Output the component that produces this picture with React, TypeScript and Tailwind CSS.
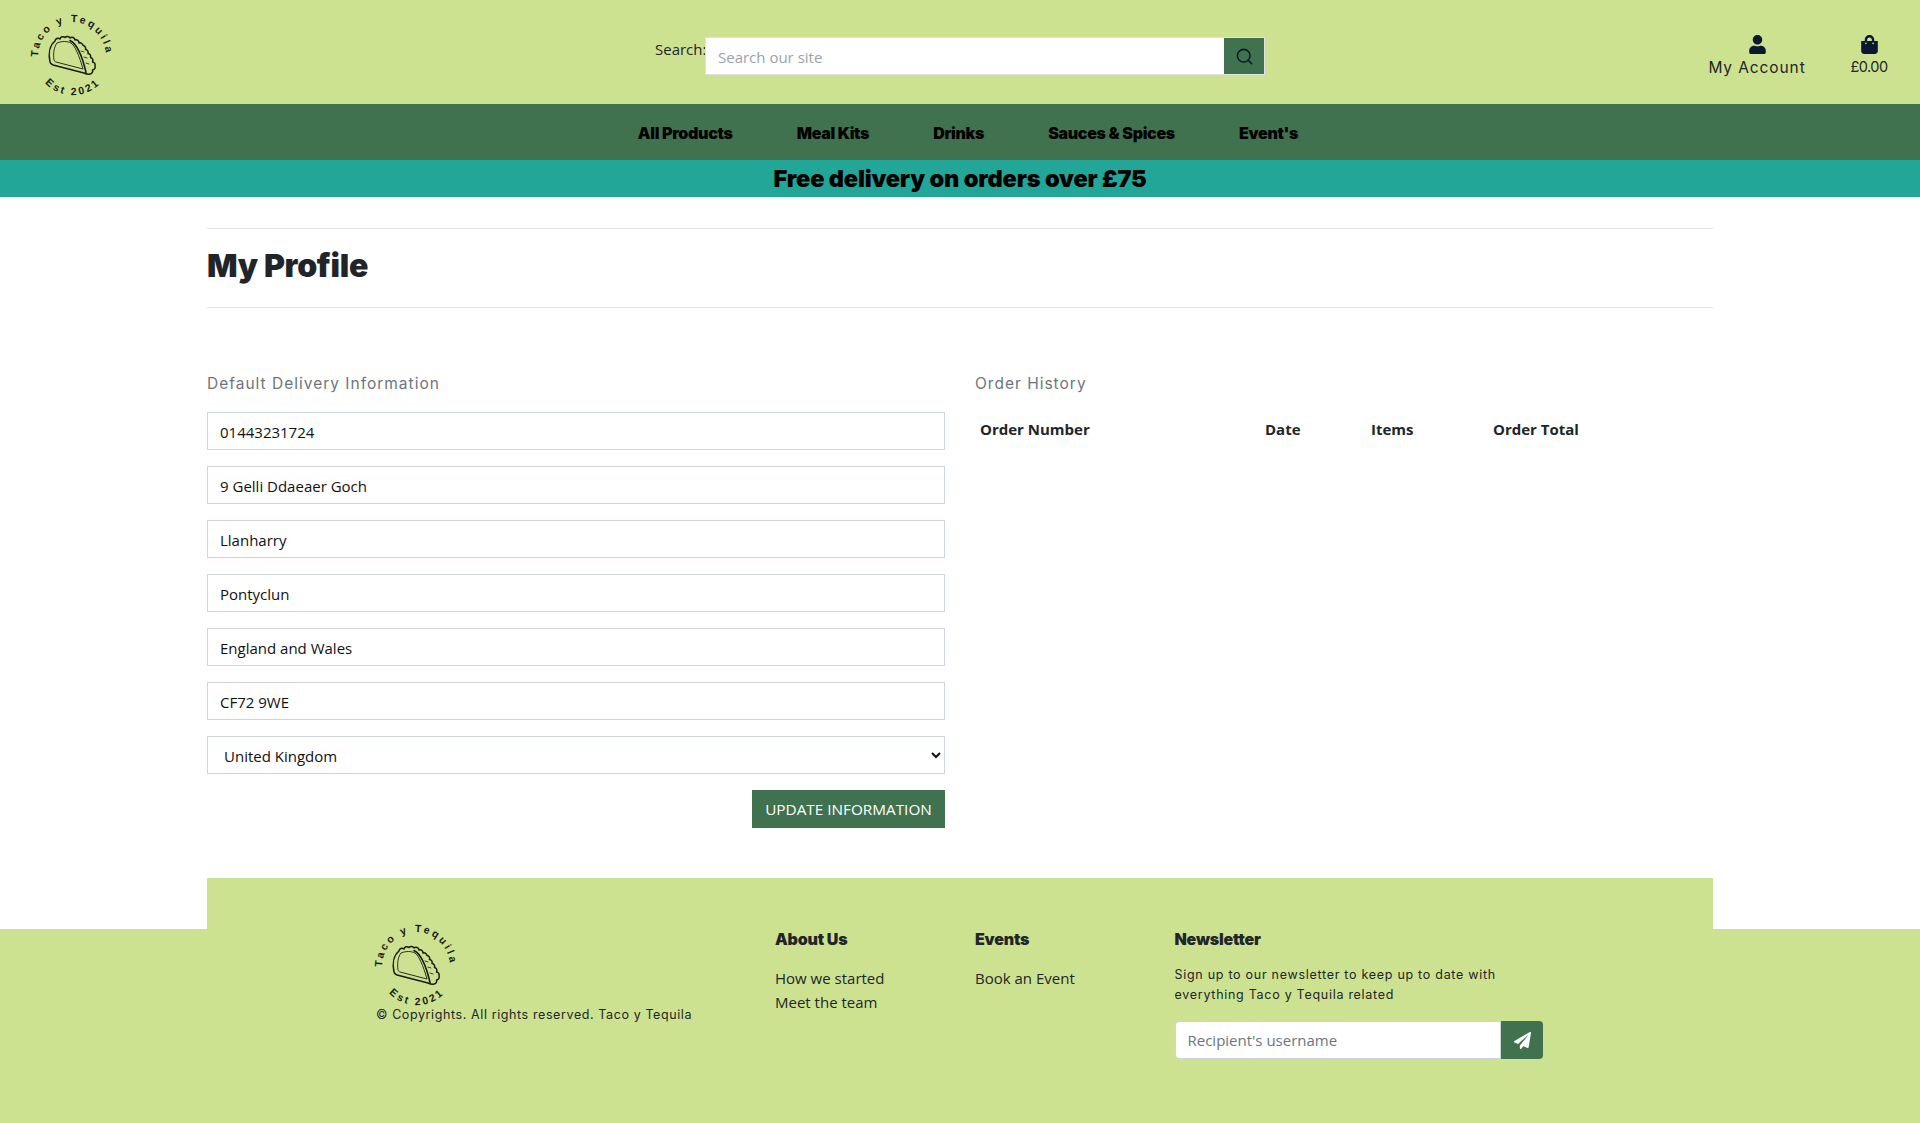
import React from "react";
import { FaUser, FaShoppingBag, FaPaperPlane } from "react-icons/fa";
import { Search } from "lucide-react";

function Logo({ id }: { id: string }) {
  const font = "'Liberation Sans Narrow', 'Liberation Sans', sans-serif";
  return (
    <svg width="90" height="90" viewBox="0 0 90 90" className="block shrink-0 overflow-visible">
      <defs>
        <path id={`${id}-top`} d="M10 46 A34 35 0 0 1 78 46" fill="none" />
        <path id={`${id}-bot`} d="M17 72 A38 38 0 0 0 74 70.500" fill="none" />
      </defs>
      <text fontFamily={font} fontSize="10.5" fontWeight="700" fill="#161c14">
        <textPath href={`#${id}-top`} startOffset="0" textLength="104">Taco y Tequila</textPath>
      </text>
      <text fontFamily={font} fontSize="10.5" fontWeight="700" fill="#161c14">
        <textPath href={`#${id}-bot`} startOffset="0" textLength="60">Est 2021</textPath>
      </text>
      <g fill="none" stroke="#161c14" strokeLinejoin="round" strokeLinecap="round" transform="translate(-2 0)">
        <path strokeWidth="1.5" d="M24 51 C22 42 24 34 29 30 A3 3 0 0 1 34 28 A3 3 0 0 1 39 26.500 A3 3 0 0 1 44 27 A3 3 0 0 1 49 29 A3 3 0 0 1 53 32 A3 3 0 0 1 57 34.500 A3 3 0 0 1 59.500 38.500 A3 3 0 0 1 62 42.500 A3 3 0 0 1 64.500 46.500 A3 3 0 0 1 66.500 51 A3 3 0 0 1 69 55 A3 3 0 0 1 66.500 59 A3 3 0 0 1 64 63 C62 64 60 63 58 62 L27 54 C25 53 24 52 24 51 Z" />
        <path strokeWidth="0.9" d="M28 49 C27 42 28 36 31 32 C36 30 41 30 45 32 C49 35 53 44 57 58 L30 51 Z" />
        <path strokeWidth="1.6" d="M44 29.500 C51 33 56 44 60 61.500" />
        <path strokeWidth="0.8" d="M55 40 L58 41 M58 46 L61 47 M60 52 L63 53" />
      </g>
    </svg>
  );
}

const fields = ["01443231724", "9 Gelli Ddaeaer Goch", "Llanharry", "Pontyclun", "England and Wales", "CF72 9WE"];
const nav = ["All Products", "Meal Kits", "Drinks", "Sauces & Spices", "Event's"];
const body = "font-['Open_Sans','Noto_Sans',sans-serif]";
const display = "font-['Inter',sans-serif] font-black";
const round = "font-['Inter',sans-serif]";

export default function App() {
  return (
    <div className={`min-h-screen flex flex-col bg-white text-[#212529] ${body}`}>
      <header className="h-[104px] bg-[#cde290] flex items-start relative">
        <div className="w-[655px] pl-[28px] pt-[11px]">
          <Logo id="head" />
        </div>
        <div className="flex items-start pt-[37px]">
          <label className="text-[15px] leading-[24px] w-[50px] text-[#212529]">Search:</label>
          <div className="flex w-[560px] h-[38px] border border-[#dee2e6] bg-white">
            <input placeholder="Search our site" className="flex-1 min-w-0 px-3 text-[15px] outline-none placeholder:text-[#9aa3ab] pt-[2px]" />
            <button className="w-[40px] bg-[#41724f] flex items-center justify-center text-[#0b1a2b]">
              <Search size={19} strokeWidth={2} />
            </button>
          </div>
        </div>
        <div className="ml-auto flex pt-[35px] pr-[31px]">
          <div className="flex flex-col items-center w-[98px] mr-[43px] text-[#0b1830]">
            <FaUser size={19} />
            <span className={`${round} text-[15.5px] leading-[24px] tracking-[0.9px] mt-[2px] whitespace-nowrap text-[#212529]`}>My Account</span>
          </div>
          <div className="flex flex-col items-center w-[40px] text-[#0b1830]">
            <FaShoppingBag size={19} />
            <span className={`${round} text-[14.5px] leading-[22px] tracking-[-0.5px] mt-[2px] text-[#212529]`}>£0.00</span>
          </div>
        </div>
      </header>

      <nav className="h-[56px] bg-[#41724f] flex items-center justify-center gap-[64px] pl-[16px]">
        {nav.map((n) => (
          <a key={n} className={`${display} text-[16px] tracking-[-0.3px] text-black mt-[1px]`}>{n}</a>
        ))}
      </nav>

      <div className="h-[37px] bg-[#21a698] flex items-center justify-center text-black">
        <span className={`${display} text-[23.6px] tracking-[-0.2px] leading-none mt-[1px]`}>Free delivery on orders over £75</span>
      </div>

      <main className="w-[1506px] mx-auto flex-none">
        <div className="mt-[31px] border-t border-b border-[#e3e5e7] h-[80px] flex items-center">
          <h1 className={`${display} text-[32px] tracking-[-0.3px] text-[#212529] leading-none -mt-[5px]`}>My Profile</h1>
        </div>

        <div className="flex gap-[30px] mt-[64px]">
          <section className="w-[738px]">
            <h2 className={`${round} text-[15.5px] leading-[24px] tracking-[1px] text-[#6c757d] mb-[16px]`}>Default Delivery Information</h2>
            <div className="flex flex-col gap-[16px]">
              {fields.map((f) => (
                <input key={f} defaultValue={f} className="h-[38px] w-full border border-[#ced4da] bg-white px-3 text-[15px] text-[#111] outline-none pt-[1px]" />
              ))}
              <select defaultValue="United Kingdom" className="h-[38px] w-full border border-[#ced4da] bg-white px-3 text-[15px] text-[#111] outline-none pt-[1px]">
                <option>United Kingdom</option>
              </select>
            </div>
            <div className="flex justify-end mt-[16px]">
              <button className="h-[38px] w-[193px] bg-[#41724f] text-white text-[15.3px]">UPDATE INFORMATION</button>
            </div>
          </section>

          <section className="flex-1">
            <h2 className={`${round} text-[15.5px] leading-[24px] tracking-[1px] text-[#6c757d] mb-[22px]`}>Order History</h2>
            <div className="grid grid-cols-[285px_106px_122px_1fr] text-[15px] font-bold text-[#212529] pl-[5px] leading-[24px] -mt-[1px]">
              <span>Order Number</span>
              <span>Date</span>
              <span>Items</span>
              <span>Order Total</span>
            </div>
          </section>
        </div>

        <div className="h-[51px] bg-[#cde290] mt-[50px]" />
      </main>

      <footer className="flex-1 bg-[#cde290]">
        <div className="w-[1506px] mx-auto flex pl-[169px] text-[#212529]">
          <div className="w-[399px] -mt-[8px]">
            <div className="-ml-[4px]"><Logo id="foot" /></div>
            <p className={`${round} text-[12.5px] leading-[16px] tracking-[0.6px] -mt-[4px] whitespace-nowrap`}>© Copyrights. All rights reserved. Taco y Tequila</p>
          </div>
          <div className="w-[200px]">
            <h3 className={`${display} text-[16px] tracking-[-0.2px] leading-[20px] mb-[17px]`}>About Us</h3>
            <p className="text-[15px] leading-[24px]">How we started</p>
            <p className="text-[15px] leading-[24px]">Meet the team</p>
          </div>
          <div className="w-[199.5px]">
            <h3 className={`${display} text-[16px] tracking-[-0.2px] leading-[20px] mb-[17px]`}>Events</h3>
            <p className="text-[15px] leading-[24px]">Book an Event</p>
          </div>
          <div className="w-[368.5px]">
            <h3 className={`${display} text-[16px] tracking-[-0.2px] leading-[20px] mb-[16px]`}>Newsletter</h3>
            <p className={`${round} text-[12.5px] leading-[20px] tracking-[0.72px] mb-[16px] whitespace-nowrap`}>Sign up to our newsletter to keep up to date with<br />everything Taco y Tequila related</p>
            <div className="flex w-full h-[38px]">
              <input placeholder="Recipient's username" className="flex-1 min-w-0 px-3 rounded-l-[4px] border border-[#ced4da] bg-white text-[15px] outline-none placeholder:text-[#6c757d]" />
              <button className="w-[42px] bg-[#41724f] rounded-r-[4px] flex items-center justify-center text-white">
                <FaPaperPlane size={17} />
              </button>
            </div>
          </div>
        </div>
      </footer>
    </div>
  );
}
